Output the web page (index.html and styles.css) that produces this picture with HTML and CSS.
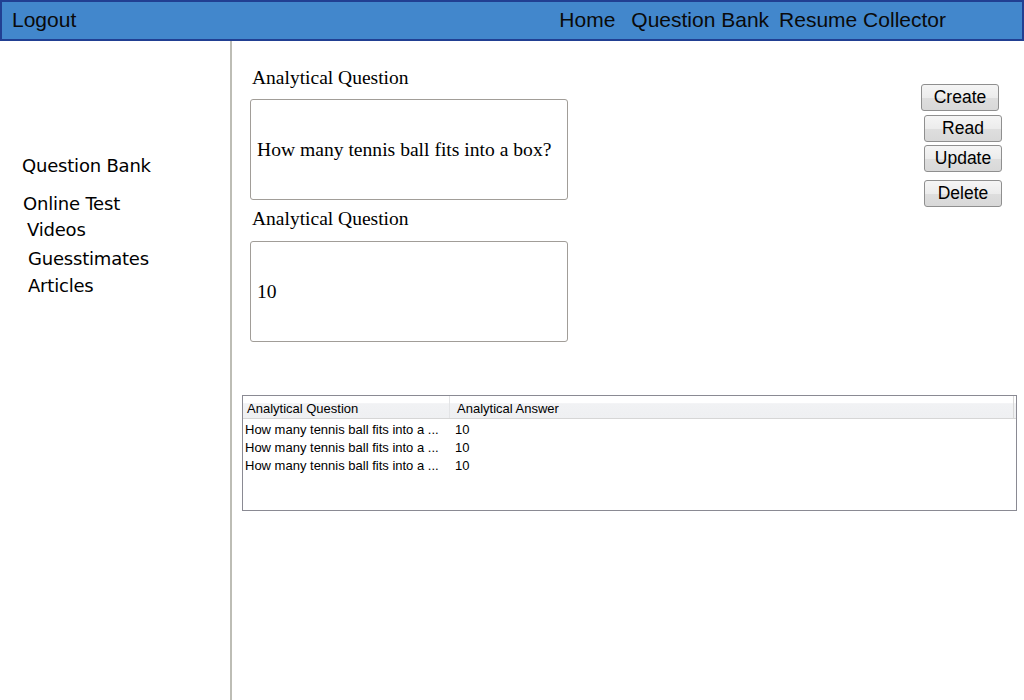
FILE: index.html
```html
<!DOCTYPE html>
<html>
<head>
<meta charset="utf-8">
<link rel="stylesheet" href="styles.css">
</head>
<body>
<header class="topbar">
  <span class="logout">Logout</span>
  <nav class="nav">
    <span class="nav-home">Home</span>
    <span class="nav-qb">Question Bank</span>
    <span class="nav-rc">Resume Collector</span>
  </nav>
</header>
<div class="page">
  <aside class="sidebar">
    <div class="side-qb">Question Bank</div>
    <div class="side-ot">Online Test</div>
    <div class="side-sub">Videos</div>
    <div class="side-sub side-gu">Guesstimates</div>
    <div class="side-sub side-ar">Articles</div>
  </aside>
  <main class="main">
    <div class="top">
      <div class="form">
        <div class="label">Analytical Question</div>
        <div class="box">How many tennis ball fits into a box?</div>
        <div class="label label2">Analytical Question</div>
        <div class="box">10</div>
      </div>
      <div class="buttons">
        <button class="btn btn-create">Create</button>
        <button class="btn btn-read">Read</button>
        <button class="btn btn-update">Update</button>
        <button class="btn btn-delete">Delete</button>
      </div>
    </div>
    <div class="grid">
      <div class="grid-head">
        <div class="c1 hc">Analytical Question</div>
        <div class="c2 hc">Analytical Answer</div>
        <div class="c3"></div>
      </div>
      <div class="row"><div class="c1">How many tennis ball fits into a ...</div><div class="c2">10</div></div>
      <div class="row"><div class="c1">How many tennis ball fits into a ...</div><div class="c2">10</div></div>
      <div class="row"><div class="c1">How many tennis ball fits into a ...</div><div class="c2">10</div></div>
    </div>
  </main>
</div>
</body>
</html>
```
FILE: styles.css
```css
html, body {
  margin: 0;
  padding: 0;
  background: #ffffff;
}
body {
  width: 1024px;
  height: 700px;
  overflow: hidden;
  font-family: "Liberation Sans", Arial, sans-serif;
  color: #000;
}
.topbar {
  box-sizing: border-box;
  height: 41px;
  border: 2px solid #213f92;
  background: #4287cc;
  display: flex;
  align-items: center;
  justify-content: space-between;
  font-size: 21px;
  color: #0a0a0a;
}
.logout {
  padding-left: 10px;
  padding-bottom: 1px;
}
.nav {
  display: flex;
  padding-right: 76px;
  padding-bottom: 2px;
}
.nav-qb { margin-left: 16px; }
.nav-rc { margin-left: 10px; }

.page {
  display: flex;
  height: 659px;
}
.sidebar {
  box-sizing: border-box;
  width: 232px;
  border-right: 2px solid #bdbdb5;
  padding-top: 112px;
  font-family: "DejaVu Sans", Verdana, sans-serif;
  font-size: 18px;
  letter-spacing: -0.2px;
}
.side-qb {
  padding-left: 22px;
  line-height: 26px;
}
.side-ot {
  padding-left: 23px;
  margin-top: 12px;
  line-height: 26px;
}
.side-sub {
  padding-left: 27px;
  line-height: 26px;
}
.side-gu { margin-top: 3px; padding-left: 28px; }
.side-ar { margin-top: 1px; padding-left: 28px; }

.main {
  flex: 1;
  display: flex;
  flex-direction: column;
}
.top {
  display: flex;
  justify-content: space-between;
  height: 354px;
}
.form {
  padding-left: 18px;
  padding-top: 26px;
  font-family: "Liberation Serif", "Times New Roman", serif;
}
.label {
  font-size: 19.5px;
  line-height: 22px;
  padding-left: 2px;
  margin-bottom: 10px;
}
.label2 {
  margin-top: 8px;
  margin-bottom: 11px;
}
.box {
  box-sizing: border-box;
  width: 318px;
  height: 101px;
  border: 1px solid #a19d98;
  border-radius: 3px;
  display: flex;
  align-items: center;
  padding-left: 6px;
  font-size: 19.6px;
  padding-top: 1px;
}
.buttons {
  display: flex;
  flex-direction: column;
  align-items: flex-end;
  padding-top: 43px;
  padding-right: 22px;
}
.btn {
  box-sizing: border-box;
  width: 78px;
  height: 27px;
  border: 1px solid #8f8f8f;
  border-radius: 3px;
  background: linear-gradient(#f5f5f5 0%, #ececec 50%, #dedede 52%, #d8d8d8 100%);
  font-family: "Liberation Sans", Arial, sans-serif;
  font-size: 17.5px;
  color: #000;
  padding: 0;
  margin: 0;
}
.btn-create { margin-right: 3px; }
.btn-read { margin-top: 4px; }
.btn-update { margin-top: 3px; }
.btn-delete { margin-top: 8px; }

.grid {
  box-sizing: border-box;
  margin-left: 10px;
  width: 775px;
  height: 116px;
  border: 1px solid #8a8a93;
  font-family: "Liberation Sans", Arial, sans-serif;
  font-size: 13px;
}
.grid-head {
  display: flex;
  height: 22px;
  background: linear-gradient(#ffffff 0%, #ffffff 30%, #f1f2f4 35%, #eff0f2 100%);
  border-bottom: 1px solid #d6d6d6;
  margin-bottom: 2px;
}
.hc {
  line-height: 22px;
  padding-top: 2px;
  box-sizing: border-box;
}
.grid-head .c1 {
  width: 207px;
  padding-left: 4px;
  border-right: 1px solid #e3e4e6;
}
.grid-head .c2 {
  padding-left: 7px;
  flex: 1;
}
.grid-head .c3 {
  width: 2px;
  border-left: 1px solid #d8d8d8;
}
.row {
  display: flex;
  height: 18px;
  line-height: 18px;
}
.row .c1 {
  width: 208px;
  padding-left: 2px;
  box-sizing: border-box;
  white-space: nowrap;
}
.row .c2 {
  padding-left: 4px;
}
```
